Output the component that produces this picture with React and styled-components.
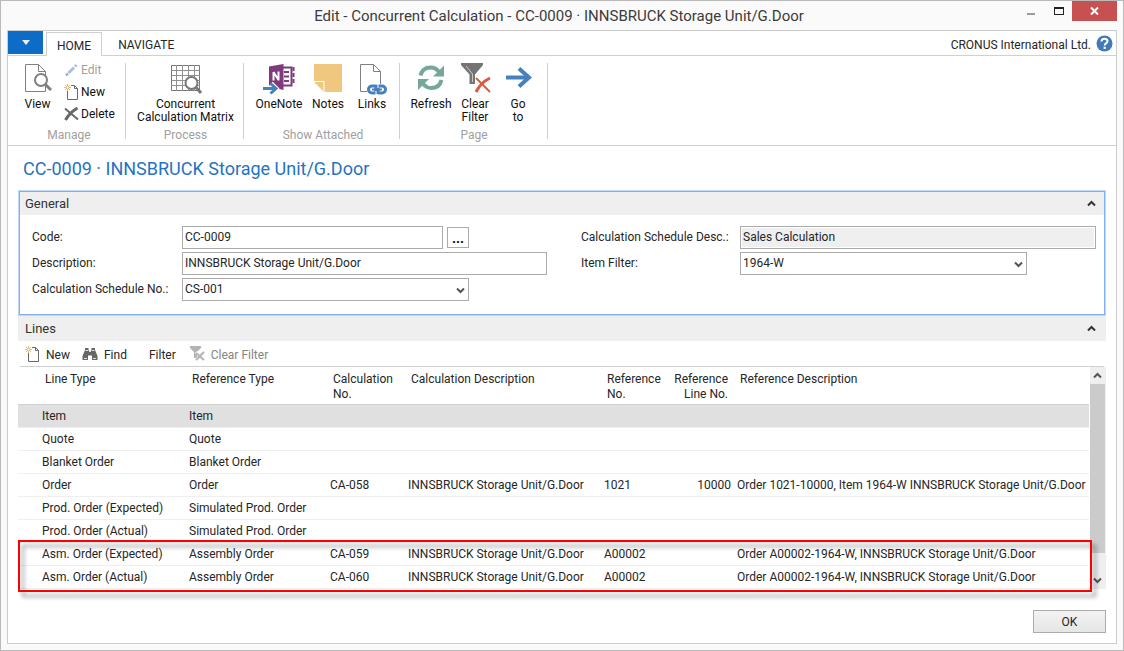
import React from 'react';
import styled, { createGlobalStyle, css } from 'styled-components';

const GlobalStyle = createGlobalStyle`
  * { box-sizing: border-box; }
  body { margin: 0; }
  body, button, input, select {
    font-family: Roboto, "Open Sans", sans-serif;
    font-size: 12px;
    color: #262626;
  }
  button { border: 0; padding: 0; background: none; }
`;

const Window = styled.div`
  display: flex;
  flex-direction: column;
  min-height: 100vh;
  border: 1px solid #bababa;
  background: #fafafa;
`;

const TitleBar = styled.header`
  display: grid;
  grid-template-columns: 1fr auto 1fr;
  height: 29px;
  padding-right: 6px;
`;

const WindowTitle = styled.h1`
  grid-column: 2;
  margin: 0;
  font-size: 15px;
  font-weight: 400;
  line-height: 31px;
  color: #3c3c3c;
  white-space: nowrap;
`;

const WindowButtons = styled.div`
  display: flex;
  justify-content: flex-end;
  height: 20px;
`;

const WindowButton = styled.button`
  display: grid;
  place-items: center;
  width: ${(p) => (p.$close ? 45 : 27)}px;
  background: ${(p) => (p.$close ? '#c75050' : 'transparent')};
`;

const Frame = styled.main`
  display: flex;
  flex: 1;
  flex-direction: column;
  margin: 0 6px 6px;
  border: 1px solid #cdcdcd;
  background: #fff;
`;

const TabStrip = styled.nav`
  display: flex;
  align-items: flex-end;
  height: 25px;
  padding-right: 3px;
  border-bottom: 1px solid #d0d0d0;
`;

const AppMenu = styled.button`
  display: grid;
  place-items: center;
  width: 35px;
  height: 23px;
  margin: 0 3px 1px 0;
  background: #0c6cc6;
`;

const Tab = styled.button`
  height: 24px;
  padding: 3px 10px 0;
  border: 1px solid transparent;
  border-bottom: 0;
  font-size: 12px;
  line-height: 20px;
  ${(p) =>
    p.$active &&
    css`
      margin-bottom: -1px;
      border-color: #d0d0d0;
      background: #fff;
    `}
  & + & { padding: 3px 15px 0; }
`;

const Company = styled.span`
  margin-left: auto;
  margin-right: 5px;
  font-size: 12px;
  line-height: 19px;
`;

const HelpButton = styled.button`
  width: 17px;
  height: 23px;
  svg { display: block; }
`;

const Ribbon = styled.section`
  display: flex;
  height: 90px;
  padding-top: 7px;
  border-bottom: 1px solid #d0d0d0;
`;

const RibbonGroup = styled.div`
  display: flex;
  flex-direction: column;
  justify-content: space-between;
  height: 76px;
  padding: 0 ${(p) => p.$padRight || 7}px 0 ${(p) => p.$padLeft || 7}px;
  border-right: 1px solid #d0d0d0;
`;

const GroupTools = styled.div`
  display: flex;
`;

const GroupName = styled.div`
  font-size: 12px;
  line-height: 8px;
  text-align: center;
  color: #a0a0a0;
`;

const BigButton = styled.button`
  display: flex;
  flex-direction: column;
  align-items: center;
  width: ${(p) => p.$width}px;
  line-height: 13px;
  font-size: 12px;
  color: #111;
  white-space: nowrap;
  svg { display: block; margin-bottom: 3px; }
`;

const SmallStack = styled.div`
  display: flex;
  flex-direction: column;
  padding-left: 5px;
`;

const SmallButton = styled.button`
  display: flex;
  align-items: center;
  gap: 2px;
  width: 58px;
  height: 22px;
  padding-bottom: 8px;
  font-size: 12px;
  color: ${(p) => (p.disabled ? '#a0a0a0' : '#111')};
`;

const Content = styled.div`
  display: flex;
  flex: 1;
  flex-direction: column;
  padding: 0 10px 10px;
`;

const PageTitle = styled.h2`
  margin: 0 5px;
  padding-top: 2px;
  font-size: 18px;
  font-weight: 400;
  line-height: 42px;
  color: #1f74c4;
`;

const FastTab = styled.section`
  ${(p) =>
    p.$focused &&
    css`
      border: 1px solid #bcd7fb;
      outline: 1px solid #7fb0f6;
      outline-offset: -2px;
      padding: 1px;
    `}
`;

const FastTabHeader = styled.button`
  display: flex;
  justify-content: space-between;
  align-items: center;
  width: 100%;
  height: ${(p) => (p.$tall ? 25 : 23)}px;
  padding: 0 ${(p) => (p.$tall ? 10 : 8)}px 0 ${(p) => (p.$tall ? 7 : 5)}px;
  background: #efefef;
  font-size: 13px;
  color: #333;
`;

const FieldGroups = styled.div`
  display: grid;
  grid-template-columns: 1fr 1fr;
  gap: 34px;
  padding: 11px 8px 13px 12px;
`;

const FieldColumn = styled.div`
  display: flex;
  flex-direction: column;
  gap: 3px;
`;

const Field = styled.div`
  display: grid;
  grid-template-columns: ${(p) => p.$label}px 1fr;
  align-items: center;
  height: 23px;
  label { padding-bottom: 1px; line-height: 20px; white-space: nowrap; }
`;

const controlBox = css`
  width: 100%;
  height: 23px;
  padding: 0 2px 1px;
  border: 1px solid #ababab;
  border-radius: 0;
  background: #fff;
  outline: 0;
`;

const TextBox = styled.input`
  ${controlBox}
  &:read-only {
    background: #efefef;
    box-shadow: inset 0 0 0 1px #fff;
  }
`;

const LookupBox = styled.div`
  display: flex;
  align-items: center;
  gap: 4px;
  max-width: 287px;
`;

const AssistButton = styled.button`
  flex: none;
  width: 22px;
  height: 21px;
  border: 1px solid #ababab;
  background: #fff;
  font-size: 14px;
  font-weight: 700;
  line-height: 18px;
  color: #111;
`;

const SelectBox = styled.div`
  position: relative;
  max-width: 287px;
  select { ${controlBox} appearance: none; }
  svg {
    position: absolute;
    right: 4px;
    top: 9px;
    pointer-events: none;
  }
`;

const LinesToolbar = styled.div`
  display: flex;
  align-items: center;
  height: 26px;
  margin: 0 2px;
  padding-left: 5px;
  border-bottom: 1px solid #d0d0d0;
`;

const ToolButton = styled.button`
  display: flex;
  align-items: center;
  gap: 6px;
  height: 25px;
  padding-top: 2px;
  margin-right: ${(p) => p.$after || 0}px;
  color: ${(p) => (p.disabled ? '#858585' : '#262626')};
  svg { margin-bottom: 2px; }
`;

const GridArea = styled.div`
  display: flex;
`;

const LinesTable = styled.table`
  flex: 1;
  width: 100%;
  min-width: 0;
  table-layout: fixed;
  border-collapse: separate;
  border-spacing: 0;

  th, td {
    padding: 0 3px;
    text-align: left;
    font-weight: 400;
    white-space: nowrap;
  }
  th {
    height: 38px;
    padding: 5px 6px 2px;
    border-bottom: 1px solid #d0d0d0;
    line-height: 15px;
    vertical-align: top;
  }
  td {
    height: 23px;
    border-bottom: 1px solid #efefef;
    line-height: 18px;
  }
  th:first-child { padding-left: 27px; }
  td:first-child { padding-left: 24px; }
  th:nth-child(6), td:nth-child(6) { text-align: right; }
`;

const LineRow = styled.tr`
  td { background: ${(p) => (p.$selected ? '#e0e0e0' : 'transparent')}; }
`;

const HighlightedRows = styled.tbody`
  position: relative;
  &::after {
    content: "";
    position: absolute;
    inset: -3px -3px -3px 0;
    border: 2px solid #ff0000;
    filter: drop-shadow(4px 5px 2px rgba(0, 0, 0, 0.4));
    pointer-events: none;
  }
`;

const ScrollBar = styled.div`
  display: flex;
  flex-direction: column;
  flex: none;
  width: 16px;
  margin-left: 1px;
  background: #efefef;
`;

const ScrollArrow = styled.button`
  display: grid;
  place-items: center;
  width: 15px;
  height: 17px;
`;

const ScrollTrack = styled.div`
  flex: 1;
`;

const ScrollThumb = styled.div`
  width: 15px;
  height: 90%;
  background: #cbcbcb;
`;

const Footer = styled.footer`
  display: flex;
  justify-content: flex-end;
  margin-top: auto;
  padding-top: 21px;
`;

const OkButton = styled.button`
  width: 73px;
  height: 23px;
  border: 1px solid #ababab;
  background: linear-gradient(#f2f2f2, #e6e6e6);
  font-size: 12px;
`;

const Chevron = ({ up, color = '#555' }) => (
  <svg width="9" height="7" viewBox="0 0 9 7" fill="none" stroke={color} strokeWidth="2">
    <path d={up ? 'M1 5.5 4.5 2 8 5.5' : 'M1 1.5 4.5 5 8 1.5'} />
  </svg>
);

const ViewIcon = () => (
  <svg width="28" height="32" viewBox="1 0 28 32" fill="none" stroke="#808080">
    <path d="M2.500 1.500H15.500L22.500 8.500V28.500H2.500Z" fill="#fff" />
    <path d="M15.500 1.500V8.500H22.500" />
    <circle cx="18" cy="17" r="6" fill="#fff" strokeWidth="2" />
    <path d="M22.500 21.500 28 27" strokeWidth="3" />
  </svg>
);

const MatrixIcon = () => (
  <svg width="32" height="32" viewBox="1 0 32 32" fill="none" stroke="#909090">
    <path d="M2.500 2.500H30.500V27.500H2.500Z" fill="#fff" stroke="#777" />
    <path d="M7.500 2V28M13.500 2V28M19.500 2V28M25.500 2V28M2 7.500H31M2 12.500H31M2 17.500H31M2 22.500H31" />
    <circle cx="22.500" cy="20" r="6" fill="#fff" stroke="#777" strokeWidth="2" />
    <path d="M27 24.500 32 30" stroke="#777" strokeWidth="3" />
  </svg>
);

const OneNoteIcon = () => (
  <svg width="32" height="32" viewBox="0 0 32 32" fill="none">
    <path d="M20 4.500H28.500V22.500H20" stroke="#80397b" strokeWidth="2" />
    <path d="M21 9H26M21 13.500H26M21 18H26" stroke="#80397b" strokeWidth="2" />
    <path d="M30.500 4V8M30.500 10V14M30.500 16V20" stroke="#80397b" strokeWidth="2" />
    <path d="M6 3.500 20.500 1V27L6 23.500Z" fill="#80397b" />
    <path d="M10.500 17.500V9M15.500 17.500V8.500M10.500 9 15.500 17" stroke="#fff" strokeWidth="2" />
    <path d="M0 25.500H13M8 20.500 13 25.500 8 30.500" stroke="#fff" strokeWidth="5" />
    <path d="M0 25.500H13M7.500 20.500 13 25.500 7.500 30.500" stroke="#4680bd" strokeWidth="3" />
  </svg>
);

const NotesIcon = () => (
  <svg width="28" height="32" viewBox="0 0 28 32">
    <path d="M0 1H28V29H10.500V18H0Z" fill="#efc77e" />
    <path d="M0 19H9.500V28.500Z" fill="#efc77e" />
  </svg>
);

const LinksIcon = () => (
  <svg width="30" height="32" viewBox="-1 0 30 32" fill="none">
    <path d="M9 28.500H2.500V1.500H15.500L22.500 8.500V21M15.500 1.500V8.500H22.500" stroke="#808080" />
    <rect x="10.500" y="23" width="10" height="7" rx="3.500" stroke="#4680bd" strokeWidth="3" />
    <rect x="17.500" y="23" width="10" height="7" rx="3.500" stroke="#4680bd" strokeWidth="3" />
    <path d="M20 21V25M18 28V32" stroke="#fff" />
    <path d="M14 26.500H24" stroke="#4680bd" strokeWidth="2" />
  </svg>
);

const RefreshIcon = () => (
  <svg width="28" height="32" viewBox="0 0 28 32" fill="none">
    <path d="M3.500 12.500C5 6.500 8.500 4.500 13.500 4.500C17.500 4.500 20 6 22 9" stroke="#75a897" strokeWidth="4" />
    <path d="M27 2.500V13.500H16Z" fill="#75a897" />
    <path d="M24.500 17C23 23 19.500 25 14.500 25C10.500 25 8 23.500 6 20.500" stroke="#75a897" strokeWidth="4" />
    <path d="M1 27V16H12Z" fill="#75a897" />
  </svg>
);

const ClearFilterIcon = () => (
  <svg width="32" height="32" viewBox="-1 0 32 32" fill="none">
    <path d="M1 0H23V2L15 11.500V21H9.500V11.500L1 2Z" fill="#747474" />
    <path d="M6 3 12.500 11V19" stroke="#c8c8c8" />
    <path d="M16 15 30 29" stroke="#dc5b3c" strokeWidth="2" />
    <path d="M30 15C24 18 19 23 16 29" stroke="#dc5b3c" strokeWidth="3" />
  </svg>
);

const GoToIcon = () => (
  <svg width="28" height="32" viewBox="-2 0 28 32" fill="none" stroke="#4680bd" strokeWidth="4">
    <path d="M0 14.500H23" />
    <path d="M13 5.500 23 14.500 13 23.500" />
  </svg>
);

const PencilIcon = () => (
  <svg width="15" height="14" viewBox="0 0 15 14" fill="none" stroke="#a8c3df">
    <path d="M4.500 10 10 4.500" strokeWidth="3" />
    <path d="M11 3.500 12.500 2" strokeWidth="3" />
    <path d="M2 12.500 4 10.500" stroke="#8aa8c8" strokeWidth="2" />
  </svg>
);

const NewIcon = () => (
  <svg width="15" height="16" viewBox="0 0 15 16" fill="none">
    <path d="M3.500 7V15.500H13.500V4.500L10.500 1.500H7" stroke="#6a6a6a" />
    <path d="M10.500 1.500V4.500H13.500" stroke="#6a6a6a" />
    <path d="M3.500 0V7M0 3.500H7M1 1 6 6M6 1 1 6" stroke="#e8b863" />
    <circle cx="3.500" cy="3.500" r="1" fill="#fff" />
  </svg>
);

const DeleteIcon = () => (
  <svg width="15" height="14" viewBox="0 0 15 14" fill="none" stroke="#686868">
    <path d="M1 1.500 14 12.500" strokeWidth="2" />
    <path d="M13.500 1C8.500 4 4 8.500 1.500 13" strokeWidth="3" />
  </svg>
);

const FindIcon = () => (
  <svg width="16" height="14" viewBox="0 0 16 14" fill="#666">
    <path d="M3 1H6.500V3L7.500 5H8.500L9.500 3V1H13V3L15.500 9V13H10V8.500H6V13H.5V9L3 3Z" />
    <path d="M2 11.500H5M11 11.500H14M3.500 3.500H6M10 3.500H12.500" stroke="#ddd" />
  </svg>
);

const SmallClearFilterIcon = () => (
  <svg width="15" height="15" viewBox="0 0 15 15" fill="none">
    <path d="M0 0H11V2L7 6V12H4V6L0 2Z" fill="#b4b4b4" />
    <path d="M6 6 14 14M14 6 6 14" stroke="#fff" strokeWidth="3" />
    <path d="M6 7 14 14M14 6 6 14" stroke="#b4b4b4" strokeWidth="2" />
  </svg>
);

const HelpIcon = () => (
  <svg width="17" height="17" viewBox="0 0 17 17" fill="none">
    <circle cx="8.500" cy="8.500" r="8" fill="#417ab6" />
    <path d="M5.500 6.500C5.500 4.500 6.800 3.700 8.500 3.700C10.300 3.700 11.500 4.700 11.500 6.200C11.500 8.200 8.700 8 8.700 10.500" stroke="#fff" strokeWidth="2" />
    <path d="M7.600 11.800H9.800V14H7.600Z" fill="#fff" />
  </svg>
);

const COLUMNS = [
  { title: ['Line Type'], width: 168 },
  { title: ['Reference Type'], width: 141 },
  { title: ['Calculation', 'No.'], width: 78 },
  { title: ['Calculation Description'], width: 196 },
  { title: ['Reference', 'No.'], width: 67 },
  { title: ['Reference', 'Line No.'], width: 66 },
  { title: ['Reference Description'] },
];

const PRODUCT = 'INNSBRUCK Storage Unit/G.Door';

const LINES = [
  ['Item', 'Item', '', '', '', '', ''],
  ['Quote', 'Quote', '', '', '', '', ''],
  ['Blanket Order', 'Blanket Order', '', '', '', '', ''],
  ['Order', 'Order', 'CA-058', PRODUCT, '1021', '10000', `Order 1021-10000, Item 1964-W ${PRODUCT}`],
  ['Prod. Order (Expected)', 'Simulated Prod. Order', '', '', '', '', ''],
  ['Prod. Order (Actual)', 'Simulated Prod. Order', '', '', '', '', ''],
];

const ASSEMBLY_LINES = [
  ['Asm. Order (Expected)', 'Assembly Order', 'CA-059', PRODUCT, 'A00002', '', `Order A00002-1964-W, ${PRODUCT}`],
  ['Asm. Order (Actual)', 'Assembly Order', 'CA-060', PRODUCT, 'A00002', '', `Order A00002-1964-W, ${PRODUCT}`],
];

const Line = ({ cells, selected }) => (
  <LineRow $selected={selected}>
    {cells.map((cell, i) => (
      <td key={i}>{cell}</td>
    ))}
  </LineRow>
);

const RibbonButton = ({ icon, lines, width }) => (
  <BigButton $width={width}>
    {icon}
    {lines.map((line) => (
      <span key={line}>{line}</span>
    ))}
  </BigButton>
);

export default function App() {
  return (
    <Window>
      <GlobalStyle />
      <TitleBar>
        <WindowTitle>Edit - Concurrent Calculation - CC-0009 · {PRODUCT}</WindowTitle>
        <WindowButtons>
          <WindowButton aria-label="Minimize">
            <svg width="9" height="14" viewBox="0 0 9 14"><path d="M0 9H8V11H0Z" fill="#999" /></svg>
          </WindowButton>
          <WindowButton aria-label="Maximize">
            <svg width="10" height="8" viewBox="0 0 10 8"><path d="M0 0H10V8H0ZM1 2V7H9V2Z" fill="#222" fillRule="evenodd" /></svg>
          </WindowButton>
          <WindowButton $close aria-label="Close">
            <svg width="9" height="8" viewBox="0 0 9 8"><path d="M1 .5 8 7.500M8 .5 1 7.500" stroke="#fff" strokeWidth="2" /></svg>
          </WindowButton>
        </WindowButtons>
      </TitleBar>
      <Frame>
        <TabStrip>
          <AppMenu aria-label="Application menu">
            <svg width="8" height="5" viewBox="0 0 8 5"><path d="M0 0H8L4 5Z" fill="#e8f2ff" /></svg>
          </AppMenu>
          <Tab $active>HOME</Tab>
          <Tab>NAVIGATE</Tab>
          <Company>CRONUS International Ltd.</Company>
          <HelpButton aria-label="Help"><HelpIcon /></HelpButton>
        </TabStrip>
        <Ribbon>
          <RibbonGroup $padLeft={8} $padRight={3}>
            <GroupTools>
              <RibbonButton icon={<ViewIcon />} lines={['View']} width={43} />
              <SmallStack>
                <SmallButton disabled><PencilIcon />Edit</SmallButton>
                <SmallButton><NewIcon />New</SmallButton>
                <SmallButton><DeleteIcon />Delete</SmallButton>
              </SmallStack>
            </GroupTools>
            <GroupName>Manage</GroupName>
          </RibbonGroup>
          <RibbonGroup $padLeft={5} $padRight={3}>
            <GroupTools>
              <RibbonButton icon={<MatrixIcon />} lines={['Concurrent', 'Calculation Matrix']} width={109} />
            </GroupTools>
            <GroupName>Process</GroupName>
          </RibbonGroup>
          <RibbonGroup $padLeft={7} $padRight={4}>
            <GroupTools>
              <RibbonButton icon={<OneNoteIcon />} lines={['OneNote']} width={56} />
              <RibbonButton icon={<NotesIcon />} lines={['Notes']} width={42} />
              <RibbonButton icon={<LinksIcon />} lines={['Links']} width={46} />
            </GroupTools>
            <GroupName>Show Attached</GroupName>
          </RibbonGroup>
          <RibbonGroup $padLeft={8} $padRight={7}>
            <GroupTools>
              <RibbonButton icon={<RefreshIcon />} lines={['Refresh']} width={46} />
              <RibbonButton icon={<ClearFilterIcon />} lines={['Clear', 'Filter']} width={42} />
              <RibbonButton icon={<GoToIcon />} lines={['Go', 'to']} width={44} />
            </GroupTools>
            <GroupName>Page</GroupName>
          </RibbonGroup>
        </Ribbon>
        <Content>
          <PageTitle>CC-0009 · {PRODUCT}</PageTitle>
          <FastTab $focused>
            <FastTabHeader>General<Chevron up color="#333" /></FastTabHeader>
            <FieldGroups>
              <FieldColumn>
                <Field $label={150}>
                  <label htmlFor="code">Code:</label>
                  <LookupBox>
                    <TextBox id="code" defaultValue="CC-0009" />
                    <AssistButton aria-label="Edit code">...</AssistButton>
                  </LookupBox>
                </Field>
                <Field $label={150}>
                  <label htmlFor="description">Description:</label>
                  <TextBox id="description" defaultValue={PRODUCT} />
                </Field>
                <Field $label={150}>
                  <label htmlFor="schedule">Calculation Schedule No.:</label>
                  <SelectBox>
                    <select id="schedule"><option>CS-001</option></select>
                    <Chevron />
                  </SelectBox>
                </Field>
              </FieldColumn>
              <FieldColumn>
                <Field $label={159}>
                  <label htmlFor="scheduleDesc">Calculation Schedule Desc.:</label>
                  <TextBox id="scheduleDesc" readOnly value="Sales Calculation" />
                </Field>
                <Field $label={159}>
                  <label htmlFor="itemFilter">Item Filter:</label>
                  <SelectBox>
                    <select id="itemFilter"><option>1964-W</option></select>
                    <Chevron />
                  </SelectBox>
                </Field>
              </FieldColumn>
            </FieldGroups>
          </FastTab>
          <FastTab>
            <FastTabHeader $tall>Lines<Chevron up color="#333" /></FastTabHeader>
            <LinesToolbar>
              <ToolButton $after={12}><NewIcon />New</ToolButton>
              <ToolButton $after={22}><FindIcon />Find</ToolButton>
              <ToolButton $after={14}>Filter</ToolButton>
              <ToolButton disabled><SmallClearFilterIcon />Clear Filter</ToolButton>
            </LinesToolbar>
            <GridArea>
              <LinesTable>
                <colgroup>
                  {COLUMNS.map((c, i) => (
                    <col key={i} width={c.width} />
                  ))}
                </colgroup>
                <thead>
                  <tr>
                    {COLUMNS.map((c, i) => (
                      <th key={i} scope="col">
                        {c.title[0]}
                        {c.title[1] && <br />}
                        {c.title[1]}
                      </th>
                    ))}
                  </tr>
                </thead>
                <tbody>
                  {LINES.map((cells, i) => (
                    <Line key={i} cells={cells} selected={i === 0} />
                  ))}
                </tbody>
                <HighlightedRows>
                  {ASSEMBLY_LINES.map((cells, i) => (
                    <Line key={i} cells={cells} />
                  ))}
                </HighlightedRows>
              </LinesTable>
              <ScrollBar>
                <ScrollArrow aria-label="Scroll up"><Chevron up /></ScrollArrow>
                <ScrollTrack><ScrollThumb /></ScrollTrack>
                <ScrollArrow aria-label="Scroll down"><Chevron /></ScrollArrow>
              </ScrollBar>
            </GridArea>
          </FastTab>
          <Footer>
            <OkButton>OK</OkButton>
          </Footer>
        </Content>
      </Frame>
    </Window>
  );
}
